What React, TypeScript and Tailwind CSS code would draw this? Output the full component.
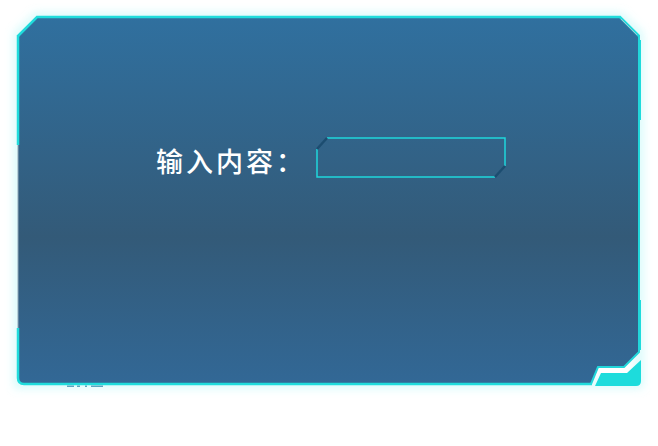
import React from "react";

function Frame() {
  return (
    <svg className="absolute inset-0 pointer-events-none" width={658} height={446} viewBox="0 0 658 446">
      <defs>
        <linearGradient id="panelBg" x1="0" y1="0" x2="0" y2="1">
          <stop offset="0" stopColor="#30709f" />
          <stop offset="0.6" stopColor="#335a78" />
          <stop offset="1" stopColor="#326896" />
        </linearGradient>
        <filter id="glow" x="-10%" y="-10%" width="120%" height="120%">
          <feGaussianBlur stdDeviation="5" />
        </filter>
      </defs>

      {/* soft glow */}
      <path
        d="M18 35 L37 17 L620 17 L639 35 L639 384 L18 384 Z"
        fill="none"
        stroke="#7ff0f0"
        strokeOpacity="0.35"
        strokeWidth="8"
        filter="url(#glow)"
      />

      {/* panel */}
      <path
        d="M18 35 L37 17 L620 17 L639 35 L639 352 L624 367 L598 367 L591 384 L24 384 Q18 384 18 378 Z"
        fill="url(#panelBg)"
      />

      {/* top + corners */}
      <path d="M18 36 L37 17 L620 17 L639 36" fill="none" stroke="#20dcdc" strokeWidth="2.5" />
      <path d="M621 19 L637 35" fill="none" stroke="#9fc6d6" strokeWidth="1" />

      {/* right edge */}
      <path d="M639 35 L639 352 L624 367 L598 367 L591 384" fill="none" stroke="#22d6da" strokeWidth="2" />
      <path d="M640.5 40 L640.5 120" stroke="#20dcdc" strokeWidth="1" />
      <path d="M640.5 300 L640.5 350" stroke="#20dcdc" strokeWidth="1" />

      {/* left edge */}
      <path d="M18 35 L18 145" stroke="#20dcdc" strokeWidth="2.5" />
      <path d="M18 145 L18 328" stroke="#8fa8b8" strokeWidth="1" />
      <path d="M18 328 L18 378 Q18 384 24 384 L592 384" fill="none" stroke="#20dcdc" strokeWidth="2.5" />

      {/* small marks under bottom edge */}
      <rect x="67" y="385.5" width="7" height="1.5" fill="#5aa6c0" />
      <rect x="77" y="385.5" width="3" height="1.5" fill="#5aa6c0" />
      <rect x="85" y="385.5" width="2" height="1.5" fill="#5aa6c0" />
      <rect x="91" y="385.5" width="12" height="1.5" fill="#5aa6c0" />

      {/* bottom-right block */}
      <path
        d="M595 386 L601 373 L627 373 L641 360 L641 381 Q641 386 636 386 Z"
        fill="#1ddcdc"
      />
    </svg>
  );
}

function InputBox() {
  return (
    <div className="relative w-[191px] h-[41px]">
      <svg className="absolute inset-0" width={191} height={41} viewBox="0 0 191 41">
        <path d="M11 1 L189 1 L189 29" fill="none" stroke="#1fd6dc" strokeWidth="1.5" />
        <path d="M1 12 L1 40 L179 40" fill="none" stroke="#1fd6dc" strokeWidth="1.5" />
        <path d="M1 12 L11 1" fill="none" stroke="#1c4d70" strokeWidth="2.5" />
        <path d="M189 29 L179 40" fill="none" stroke="#1c4d70" strokeWidth="2.5" />
      </svg>
      <input
        className="relative w-full h-full bg-transparent outline-none px-3 text-white text-[16px]"
        style={{ fontFamily: '"Noto Sans CJK SC", sans-serif' }}
      />
    </div>
  );
}

export default function App() {
  return (
    <div className="relative w-[658px] h-[446px] bg-white overflow-hidden">
      <Frame />
      <div className="relative flex items-start pt-[137px] pl-[156px]">
        <span
          className="w-[160px] mt-[10px] text-[27px] leading-[28px] tracking-[3px] text-white font-medium whitespace-nowrap"
          style={{ fontFamily: '"Noto Sans CJK SC", sans-serif' }}
        >
          输入内容：
        </span>
        <InputBox />
      </div>
    </div>
  );
}
